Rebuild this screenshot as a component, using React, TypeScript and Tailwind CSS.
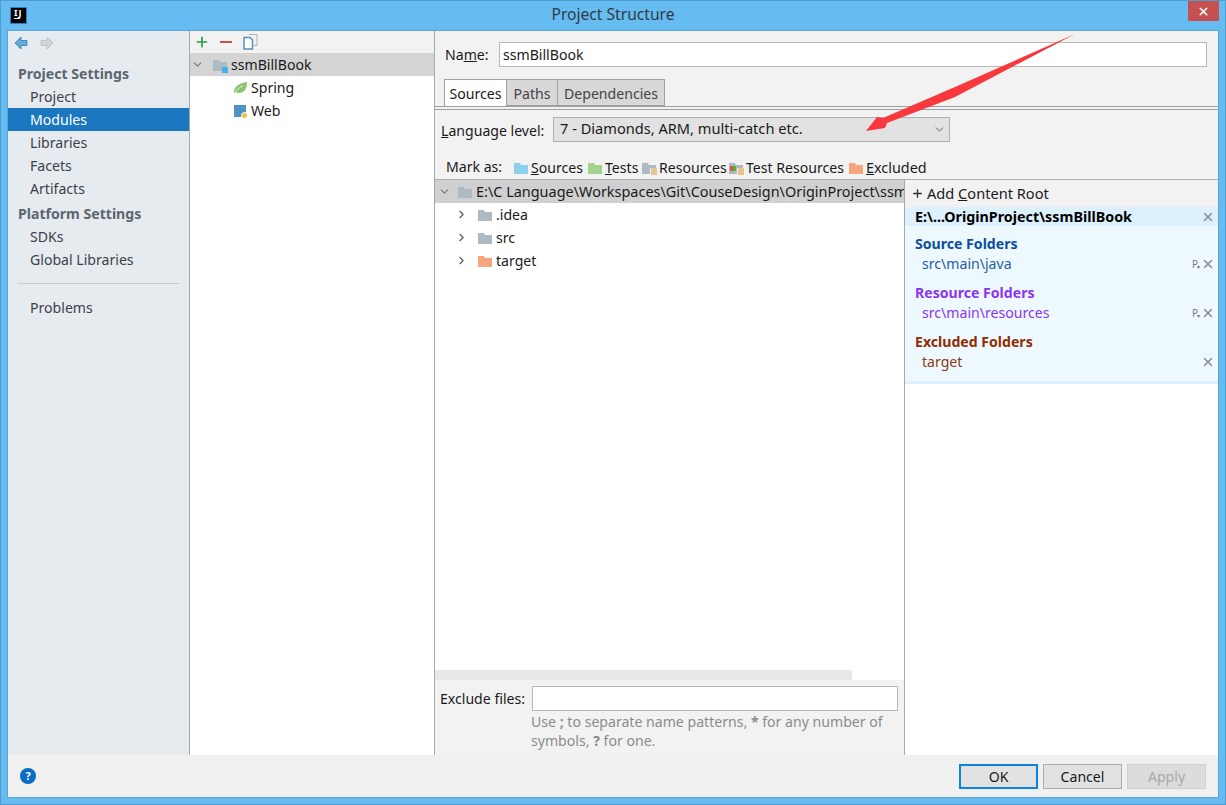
import React from 'react';
import { ChevronDown, ChevronRight, Plus, X } from 'lucide-react';

const Folder = ({ color = '#aebac3', className = '' }: { color?: string; className?: string }) => (
  <svg width="14" height="12" viewBox="0 0 14 12" className={`shrink-0 ${className}`}>
    <path d="M0 1h6l1 2h7v9H0z" fill={color} />
  </svg>
);

const Lines = () => (
  <svg width="7" height="7" viewBox="0 0 7 7" className="absolute right-[-1px] bottom-[-1px]">
    <rect width="7" height="7" fill="#f2f2f2" />
    <path d="M1 1h6M1 3h6M1 5h6M1 7h6" stroke="#e0962f" strokeWidth="1" />
  </svg>
);

const SideItem = ({ label, active = false }: { label: string; active?: boolean }) => (
  <div className={`h-[23px] pl-[22px] leading-[23px] ${active ? 'bg-[#1b78c0] text-white' : 'text-[#3c4248]'}`}>{label}</div>
);

const SideHead = ({ label }: { label: string }) => (
  <div className="h-[23px] pl-[10px] leading-[23px] font-bold text-[#5c666f]">{label}</div>
);

const TreeRow = ({ label, color }: { label: string; color: string }) => (
  <div className="flex h-[23px] items-center pl-[20px]">
    <ChevronRight size={13} strokeWidth={2} className="text-[#555]" />
    <Folder color={color} className="ml-[10px] mr-[4px]" />
    <span>{label}</span>
  </div>
);

const FolderGroup = ({
  title,
  path,
  titleColor,
  pathColor,
  pkg = true,
}: {
  title: string;
  path: string;
  titleColor: string;
  pathColor: string;
  pkg?: boolean;
}) => (
  <div className="mb-[7px]">
    <div className={`h-[22px] pl-[10px] pt-[1px] leading-[22px] font-bold ${titleColor}`}>{title}</div>
    <div className="flex h-[20px] items-center pl-[17px] pr-[3px]">
      <span className={`flex-1 ${pathColor}`}>{path}</span>
      {pkg && <span className="relative mr-[3px] text-[10px] leading-none text-[#777]">P<span className="absolute top-[5px] left-[5px] text-[6px]">▾</span></span>}
      <X size={14} strokeWidth={2.5} className="text-[#8a8a8a]" />
    </div>
  </div>
);

export default function App() {
  return (
    <div
      className="relative flex h-[805px] w-[1226px] flex-col overflow-hidden border border-[#4d9ccb] bg-[#66bcf0] text-[14.1px] text-[#1a1a1a]"
      style={{ fontFamily: '"Noto Sans", "Open Sans", sans-serif' }}
    >
      {/* title bar */}
      <div className="relative flex h-[29px] shrink-0 items-center justify-center text-[#2f3a44]">
        <div className="absolute top-[6px] left-[9px] flex h-[17px] w-[17px] flex-col border border-[#2a7fd0] bg-black pl-[3px] text-[9px] font-bold leading-[9px] text-white">
          <span className="tracking-[1px]">IJ</span>
          <span className="mt-[1px] h-[1px] w-[6px] bg-white" />
        </div>
        <span className="pb-[1px] text-[15.6px]">Project Structure</span>
        <div className="absolute top-0 right-[6px] flex h-[20px] w-[31px] items-center justify-center bg-[#c75050]">
          <X size={13} strokeWidth={3} className="text-white" />
        </div>
      </div>

      {/* client area */}
      <div className="mx-[6px] mb-[6px] flex min-h-0 flex-1 flex-col border border-[#5aa5d3] bg-[#f0f0f0]">
        <div className="flex min-h-0 flex-1">
          {/* settings list */}
          <div className="w-[182px] shrink-0 border-r border-[#a8a8a8] bg-[#e6ebf0]">
            <div className="flex h-[31px] items-start gap-[12px] pl-[6px] pt-[5px]">
              <svg width="14" height="14" viewBox="0 0 14 14">
                <path d="M7 1 1 7l6 6V9.500h6v-5H7z" fill="#6aa9d4" stroke="#3f8dc4" />
              </svg>
              <svg width="14" height="14" viewBox="0 0 14 14">
                <path d="M7 1l6 6-6 6V9.500H1v-5h6z" fill="#d0d4d8" stroke="#c0c4c8" />
              </svg>
            </div>
            <SideHead label="Project Settings" />
            <SideItem label="Project" />
            <SideItem label="Modules" active />
            <SideItem label="Libraries" />
            <SideItem label="Facets" />
            <SideItem label="Artifacts" />
            <div className="h-[2px]" />
            <SideHead label="Platform Settings" />
            <SideItem label="SDKs" />
            <SideItem label="Global Libraries" />
            <div className="mx-[10px] mt-[12px] mb-[12px] h-[1px] bg-[#c8ccd0]" />
            <SideItem label="Problems" />
          </div>

          {/* module tree */}
          <div className="w-[245px] shrink-0 border-r border-[#a8a8a8] bg-white">
            <div className="flex h-[22px] items-center gap-[9px] bg-[#f2f2f2] pl-[4px]">
              <Plus size={16} strokeWidth={2.5} className="text-[#2b9e47]" />
              <svg width="14" height="12" viewBox="0 0 14 12">
                <rect x="1" y="5" width="12" height="2" fill="#c9544e" />
              </svg>
              <svg width="15" height="16" viewBox="0 0 15 16" className="ml-[1px]">
                <path d="M6 .5h8v11h-3" fill="none" stroke="#a9b0b6" />
                <path d="M1 3.500h6l2.500 2.500v9H1z" fill="#fff" stroke="#5a90b5" strokeWidth="1.500" />
              </svg>
            </div>
            <div className="flex h-[23px] items-center bg-[#d4d4d4] pl-[1px]">
              <ChevronDown size={13} strokeWidth={2} className="text-[#777]" />
              <span className="relative ml-[9px] mr-[4px] flex">
                <Folder />
                <span className="absolute right-[-1px] bottom-[-2px] h-[6px] w-[6px] bg-[#43b0e8]" />
              </span>
              <span>ssmBillBook</span>
            </div>
            <div className="flex h-[23px] items-center pl-[43px]">
              <svg width="15" height="14" viewBox="0 0 15 14" className="mr-[3px]">
                <path d="M1 13C0 6 6 2 14 1c0 7-3 11-8 11-2 0-3-.5-4-1" fill="#8dc26f" />
                <path d="M2 12c2-4 5-6 8-7" fill="none" stroke="#fff" strokeWidth=".8" />
              </svg>
              <span>Spring</span>
            </div>
            <div className="flex h-[23px] items-center pl-[44px]">
              <span className="relative mr-[5px] h-[12px] w-[12px] bg-[#4d94c4]">
                <span className="absolute right-[-2px] bottom-[-2px] h-[7px] w-[7px] rounded-full border border-white bg-[#f3c33c]" />
              </span>
              <span>Web</span>
            </div>
          </div>

          {/* module detail */}
          <div className="flex min-w-0 flex-1 flex-col bg-[#f2f2f2]">
            <div className="flex items-center pt-[11px] pr-[11px] pl-[10px]">
              <span className="w-[54px]">Na<u>m</u>e:</span>
              <div className="h-[25px] flex-1 border border-[#b8b8b8] bg-white pl-[3px] leading-[23px]">ssmBillBook</div>
            </div>
            <div className="mt-[12px] flex h-[27px] pl-[9px]">
              <div className="w-[63px] border border-b-0 border-[#a0a0a0] bg-white text-center leading-[27px]">Sources</div>
              <div className="w-[51px] border border-l-0 border-[#a0a0a0] bg-[#d8d8d8] text-center leading-[27px] text-[#444]">Paths</div>
              <div className="w-[107px] border border-l-0 border-[#a0a0a0] bg-[#d8d8d8] text-center leading-[27px] text-[#444]">Dependencies</div>
            </div>
            <div className="h-[4px] border-t border-b border-[#a0a0a0]" />
            <div className="mt-[7px] flex items-center pl-[6px]">
              <span className="w-[112px] pt-[2px]"><u>L</u>anguage level:</span>
              <div className="flex h-[25px] w-[397px] items-center border border-[#b0b0b0] bg-[#e2e2e2] pl-[6px] pr-[3px]">
                <span className="flex-1 pb-[2px] text-[14.6px]">7 - Diamonds, ARM, multi-catch etc.</span>
                <ChevronDown size={13} strokeWidth={1.5} className="text-[#444]" />
              </div>
            </div>
            <div className="mt-[15px] flex h-[22px] items-center pl-[11px]">
              <span className="w-[68px] pb-[2px]">Mark as:</span>
              <span className="flex w-[74px] items-center"><Folder color="#8cd0ee" className="mr-[3px]" /><span><u>S</u>ources</span></span>
              <span className="flex w-[54px] items-center"><Folder color="#a3d28c" className="mr-[3px]" /><span><u>T</u>ests</span></span>
              <span className="flex w-[87px] items-center">
                <span className="relative mr-[3px] flex"><Folder /><Lines /></span>
                <span>Resources</span>
              </span>
              <span className="flex w-[120px] items-center">
                <span className="relative mr-[3px] flex">
                  <Folder />
                  <span className="absolute top-[4px] left-[1px] h-[5px] w-[3px] bg-[#e0572b]" />
                  <span className="absolute top-[4px] left-[4px] h-[5px] w-[3px] bg-[#56b04c]" />
                  <Lines />
                </span>
                <span>Test Resources</span>
              </span>
              <Folder color="#f5a67c" className="mr-[3px]" />
              <span className="text-[14.4px]"><u>E</u>xcluded</span>
            </div>

            <div className="flex min-h-0 flex-1 border-t border-[#b0b0b0]">
              {/* content tree */}
              <div className="flex w-[469px] shrink-0 flex-col">
                <div className="flex min-h-0 flex-1 flex-col bg-white">
                  <div className="flex h-[23px] items-center overflow-hidden bg-[#d0d0d0] pl-[3px] whitespace-nowrap">
                    <ChevronDown size={13} strokeWidth={2} className="shrink-0 text-[#777]" />
                    <Folder className="ml-[7px] mr-[4px]" />
                    <span className="text-[14.45px]">E:\C Language\Workspaces\Git\CouseDesign\OriginProject\ssmBillBook</span>
                  </div>
                  <TreeRow label=".idea" color="#aebac3" />
                  <TreeRow label="src" color="#aebac3" />
                  <TreeRow label="target" color="#f5a67c" />
                  <div className="flex-1" />
                  <div className="h-[10px] w-[417px] bg-[#e8e8e8]" />
                </div>
                <div className="h-[75px] shrink-0 bg-[#f2f2f2] pl-[5px] pr-[6px] pt-[6px]">
                  <div className="flex items-center">
                    <span className="w-[92px]">Exclude files:</span>
                    <div className="h-[25px] flex-1 border border-[#b8b8b8] bg-white" />
                  </div>
                  <div className="mt-[1px] pl-[91px] text-[#8c8c8c] leading-[19px]">
                    Use <b>;</b> to separate name patterns, <b>*</b> for any number of symbols, <b>?</b> for one.
                  </div>
                </div>
              </div>

              {/* content roots */}
              <div className="flex-1 border-l border-[#a8a8a8] bg-white">
                <div className="flex h-[27px] items-center bg-[#f2f2f2] pl-[6px]">
                  <Plus size={13} strokeWidth={2.5} className="mr-[3px] text-[#333]" />
                  <span className="text-[14.6px]">Add <u>C</u>ontent Root</span>
                </div>
                <div className="border-b-[3px] border-[#ddf0fd] bg-[#eef8ff]">
                  <div className="flex h-[19px] items-center bg-[#ddf0fd] pl-[10px] pr-[3px]">
                    <span className="flex-1 text-[14.3px] font-bold text-black">E:\...OriginProject\ssmBillBook</span>
                    <X size={14} strokeWidth={2.5} className="text-[#8a8a8a]" />
                  </div>
                  <div className="h-[6px]" />
                  <FolderGroup title="Source Folders" path="src\main\java" titleColor="text-[#0b4f9e]" pathColor="text-[#1f5f9f]" />
                  <FolderGroup title="Resource Folders" path="src\main\resources" titleColor="text-[#8a35f0]" pathColor="text-[#8a35f0]" />
                  <FolderGroup title="Excluded Folders" path="target" titleColor="text-[#8f2d00]" pathColor="text-[#8f3a10]" pkg={false} />
                  <div className="h-[2px]" />
                </div>
              </div>
            </div>
          </div>
        </div>

        {/* dialog buttons */}
        <div className="flex h-[42px] shrink-0 items-center bg-[#f0f0f0] pl-[12px] pr-[12px]">
          <div className="flex h-[16px] w-[16px] items-center justify-center rounded-full bg-[#0a6cc7] text-[11px] font-bold text-white">?</div>
          <div className="flex-1" />
          <div className="mr-[5px] flex h-[25px] w-[79px] items-center justify-center border-2 border-[#0a84e0] bg-[#e2e2e2] pt-[1px]">OK</div>
          <div className="mr-[5px] flex h-[25px] w-[79px] items-center justify-center border border-[#adadad] bg-[#e2e2e2] pt-[1px]">Cancel</div>
          <div className="flex h-[25px] w-[79px] items-center justify-center border border-[#d0d0d0] bg-[#dcdcdc] pt-[1px] text-[#a8a8a8]">Apply</div>
        </div>
      </div>

      {/* red annotation arrow */}
      <svg width="1226" height="805" className="pointer-events-none absolute top-[-1px] left-[-1px]">
        <path d="M1075 34 955 87 883 118 877 117 866 131 885 128 887 123 955 97 1012 67z" fill="#f8383c" />
      </svg>
    </div>
  );
}
